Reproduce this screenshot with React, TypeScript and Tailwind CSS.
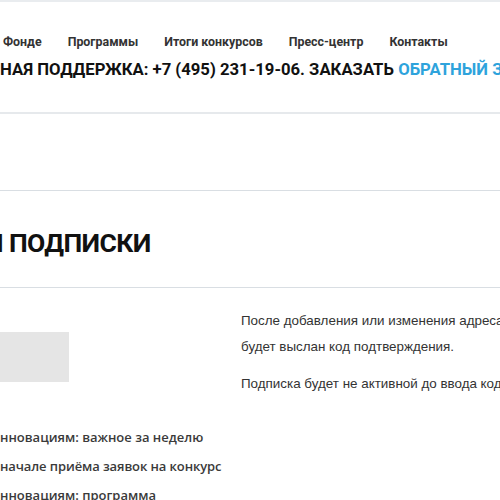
import React from "react";

export default function App() {
  return (
    <div className="w-[500px] h-[500px] overflow-hidden bg-white relative">
      <div className="h-[2px] bg-[#e9ecef]" />
      <nav className="h-[54px] flex items-end pb-[4px] pl-[3px] gap-[26px] text-[12.4px] font-bold text-[#333] font-['Roboto',sans-serif] whitespace-nowrap">
        <span className="leading-[20px]">Фонде</span>
        <span className="leading-[20px]">Программы</span>
        <span className="leading-[20px]">Итоги конкурсов</span>
        <span className="leading-[20px]">Пресс-центр</span>
        <span className="leading-[20px]">Контакты</span>
      </nav>
      <div className="h-[56px] flex items-start pt-[2px] whitespace-nowrap font-['Roboto',sans-serif] font-bold text-[16.7px] leading-[24px] text-[#111] uppercase">
        <span>Ная поддержка: +7 (495) 231-19-06. Заказать <span className="text-[#2ea3dc]">Обратный звонок</span></span>
      </div>
      <div className="h-[2px] bg-[#e6e9ec]" />
      <div className="h-[76px]" />
      <div className="h-[1px] bg-[#d9dee3]" />
      <div className="h-[96px] flex items-center pt-[8px] whitespace-nowrap font-['Roboto',sans-serif] font-bold text-[26.5px] tracking-[-0.6px] text-[#111] uppercase">
        <span className="ml-[-15px]">и подписки</span>
      </div>
      <div className="h-[1px] bg-[#d9dee3]" />
      <div className="flex">
        <div className="w-[241px] shrink-0">
          <div className="mt-[44px] w-[69px] h-[50px] bg-[#e5e5e5]" />
          <div className="mt-[41px] flex flex-col font-['Open_Sans',sans-serif] font-semibold text-[13px] text-[#3a3a3a] whitespace-nowrap leading-[29px]">
            <span>нновациям: важное за неделю</span>
            <span className="tracking-[-0.1px]">начале приёма заявок на конкурс</span>
            <span>нновациям: программа</span>
          </div>
        </div>
        <div className="pt-[20px] font-['Liberation_Sans',Arial,sans-serif] text-[13.4px] text-[#333] whitespace-nowrap">
          <p className="leading-[26px]">После добавления или изменения адреса подписки вам</p>
          <p className="leading-[26px]">будет выслан код подтверждения.</p>
          <p className="leading-[26px] mt-[11px]">Подписка будет не активной до ввода кода подтверждения.</p>
        </div>
      </div>
    </div>
  );
}
